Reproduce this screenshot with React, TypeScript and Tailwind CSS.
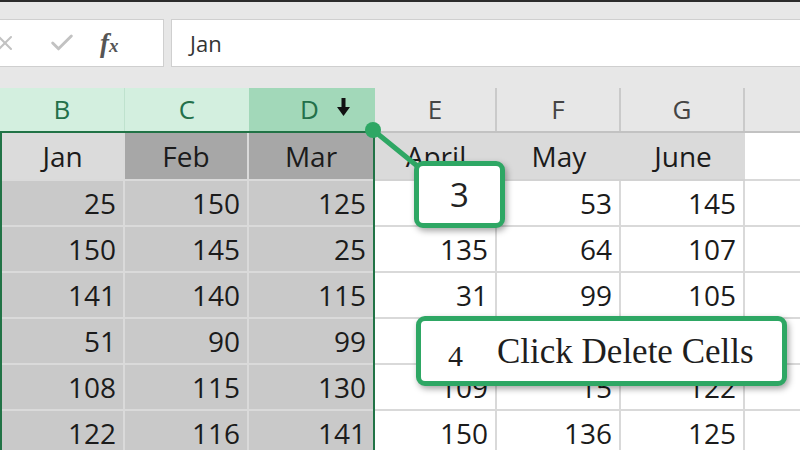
import { X, Check } from 'lucide-react';

const leftRows: (string | number)[][] = [
  ['Jan', 'Feb', 'Mar'],
  [25, 150, 125],
  [150, 145, 25],
  [141, 140, 115],
  [51, 90, 99],
  [108, 115, 130],
  [122, 116, 141],
];

// cells hidden behind the callouts are left blank
const rightRows: (string | number)[][] = [
  ['April', 'May', 'June'],
  ['', 53, 145],
  [135, 64, 107],
  [31, 99, 105],
  ['', '', ''],
  [109, 15, 122],
  [150, 136, 125],
];

function DownArrow() {
  return (
    <svg width="13" height="18" viewBox="0 0 13 18" className="ml-[18px] mb-[6px]">
      <rect x="4.5" y="0" width="4" height="10" fill="#111" />
      <polygon points="0,9 13,9 6.5,18" fill="#111" />
    </svg>
  );
}

export default function App() {
  return (
    <div className="relative w-[800px] h-[450px] overflow-hidden bg-[#e7e7e7] font-['Open_Sans',sans-serif] text-[#1b1b1b]">
      <div className="h-[2px] bg-[#2b2b2b]" />

      {/* formula bar */}
      <div className="h-[86px] flex items-start pt-[17px] gap-[7px]">
        <div className="w-[164px] h-[48px] bg-white border border-l-0 border-[#cfcfcf] flex items-center shrink-0">
          <X className="ml-[-7px] text-[#c2c2c2]" size={24} strokeWidth={2} />
          <Check className="ml-[31px] text-[#c2c2c2]" size={28} strokeWidth={2.5} />
          <span className="ml-[24px] font-['Liberation_Serif',serif] italic font-bold text-[27px] text-[#555] leading-none">
            f<span className="text-[19px]">x</span>
          </span>
        </div>
        <div className="flex-1 h-[48px] bg-white border border-r-0 border-[#cfcfcf] flex items-center pl-[18px] text-[22px] text-[#333]">
          Jan
        </div>
      </div>

      {/* column letters */}
      <div className="h-[43px] flex text-[26px]">
        <div className="w-[125px] bg-[#d3efdf] border-r border-[#bfe2ce] flex items-center justify-center text-[#23704a]">B</div>
        <div className="w-[124px] bg-[#d3efdf] flex items-center justify-center text-[#23704a]">C</div>
        <div className="w-[126px] bg-[#a2d8b9] flex items-center justify-center text-[#23704a]">
          <span className="ml-[26px]">D</span>
          <DownArrow />
        </div>
        <div className="w-[122px] border-r-2 border-[#cacaca] flex items-center justify-center text-[#444]">E</div>
        <div className="w-[124px] border-r-2 border-[#cacaca] flex items-center justify-center text-[#444]">F</div>
        <div className="w-[124px] border-r-2 border-[#cacaca] flex items-center justify-center text-[#444]">G</div>
        <div className="flex-1" />
      </div>

      {/* sheet body */}
      <div className="flex text-[28px] leading-none">
        <div className="w-[375px] border-2 border-b-0 border-[#217346] bg-[#c9c9c9]">
          {leftRows.map((row, r) => (
            <div key={r} className={`grid grid-cols-[123px_124px_124px] ${r === 0 ? 'h-[48px]' : 'h-[46px]'}`}>
              {row.map((v, c) => {
                const bg = r === 0 ? (c === 0 ? 'bg-[#dbdbdb]' : 'bg-[#a7a7a7]') : 'bg-[#c9c9c9]';
                return (
                  <div
                    key={c}
                    className={`flex items-center border-b-2 border-[#dadada] ${c < 2 ? 'border-r-2' : ''} ${bg} ${r === 0 ? 'justify-center' : 'justify-end pr-[7px]'}`}
                  >
                    {v}
                  </div>
                );
              })}
            </div>
          ))}
        </div>

        <div className="flex-1 bg-white border-t-2 border-[#c2c2c2]">
          {rightRows.map((row, r) => (
            <div key={r} className={`grid grid-cols-[122px_124px_124px_1fr] ${r === 0 ? 'h-[48px]' : 'h-[46px]'}`}>
              {row.map((v, c) => (
                <div
                  key={c}
                  className={`flex items-center border-b-2 ${r === 0 ? 'bg-[#dadada] border-[#d2d2d2] justify-center' : 'border-r-2 border-[#d9d9d9] justify-end pr-[7px]'}`}
                >
                  {v}
                </div>
              ))}
              <div className="border-b-2 border-[#d9d9d9]" />
            </div>
          ))}
        </div>
      </div>

      {/* annotations */}
      <svg className="absolute left-0 top-0 pointer-events-none" width="800" height="450">
        <line x1="373" y1="130" x2="432" y2="178" stroke="#2ea764" strokeWidth="5" strokeLinecap="round" />
        <circle cx="373" cy="130" r="8" fill="#2ea764" />
      </svg>

      <div className="absolute left-[414px] top-[161px] w-[91px] h-[67px] bg-white border-[5px] border-[#2ea764] rounded-[9px] shadow-[2px_3px_6px_rgba(0,0,0,0.35)] flex items-center justify-center text-[33px] text-[#222] leading-none">
        3
      </div>

      <div className="absolute left-[416px] top-[316px] w-[371px] h-[70px] bg-white border-[5px] border-[#2ea764] rounded-[9px] shadow-[2px_3px_6px_rgba(0,0,0,0.35)] flex items-center pl-[27px] font-['Liberation_Serif',serif] text-[#1e1e1e] leading-none">
        <span className="text-[30px] mt-[10px]">4</span>
        <span className="ml-[34px] text-[35px]">Click Delete Cells</span>
      </div>
    </div>
  );
}
